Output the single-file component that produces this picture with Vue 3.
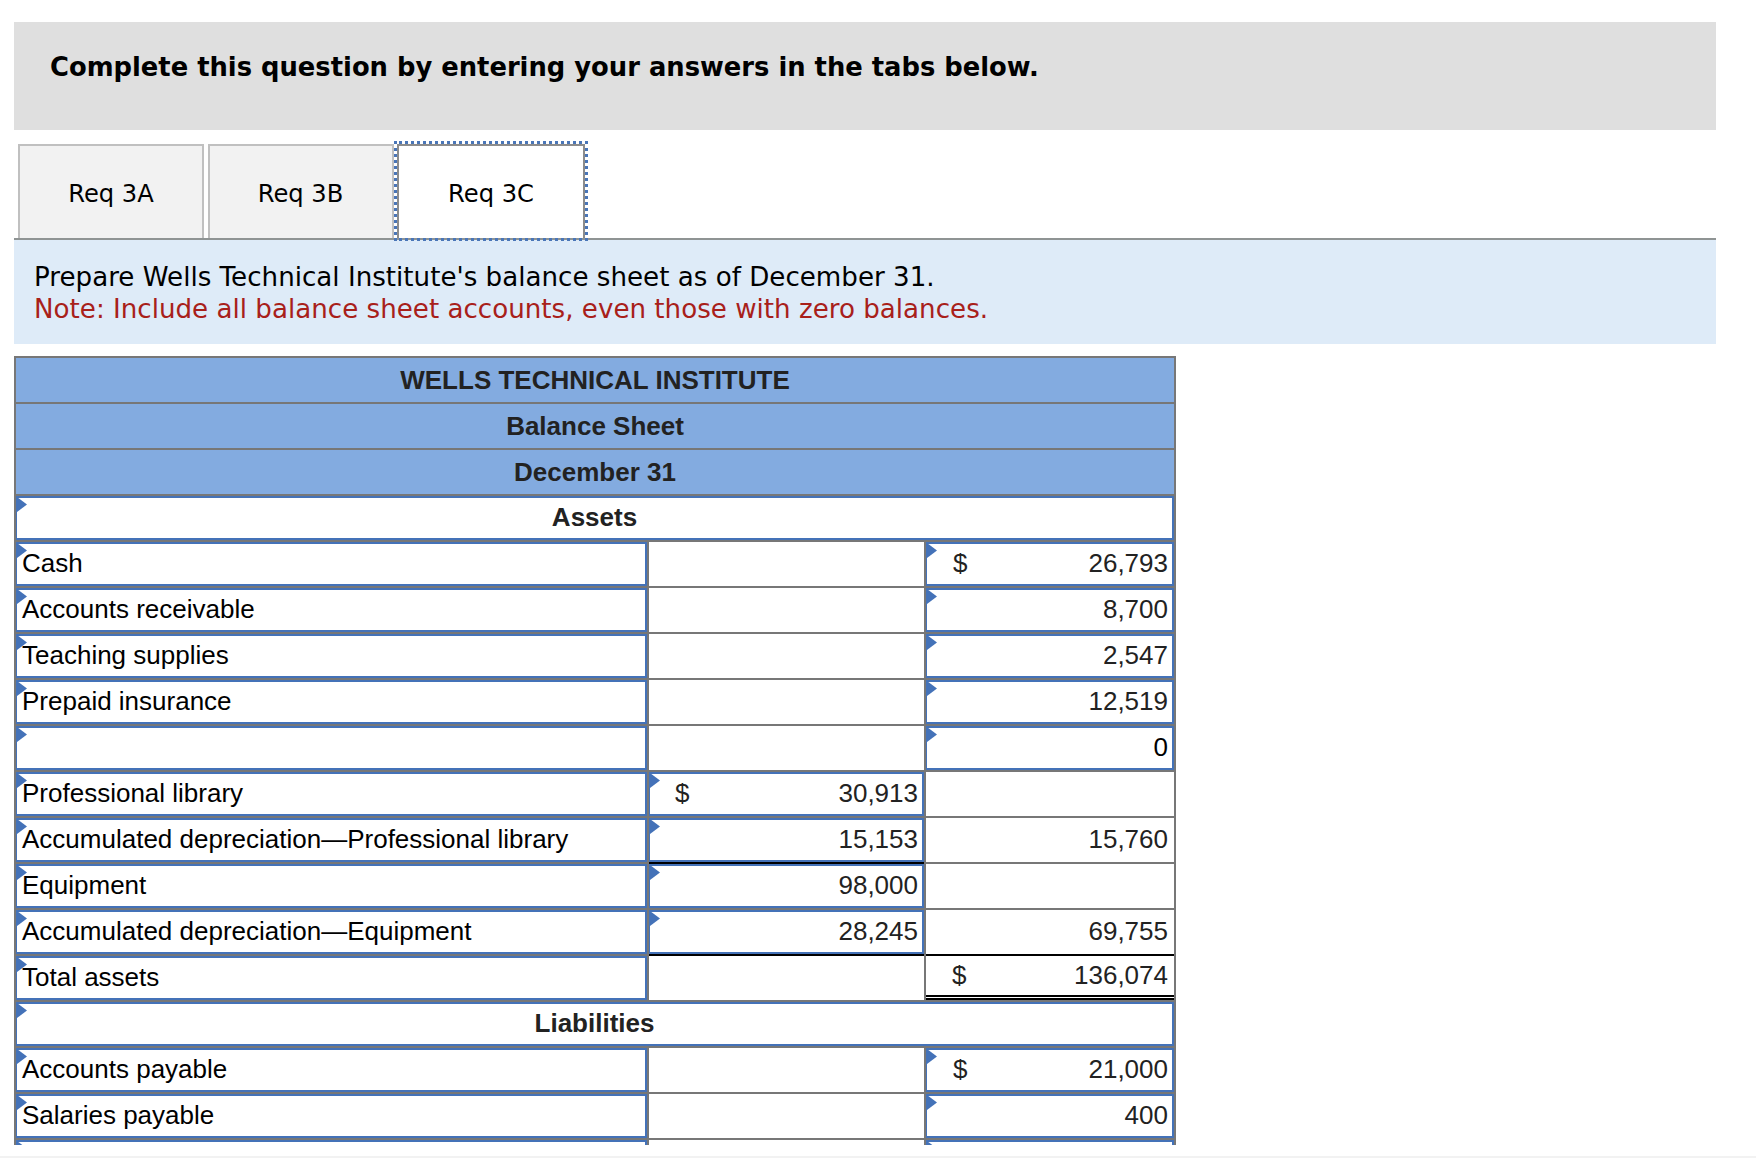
<script setup>
import { ref } from 'vue';

const tabs = ['Req 3A', 'Req 3B', 'Req 3C'];
const activeTab = ref('Req 3C');

const field = (val, sign = false, rule = '') => ({ val, sign, input: true, rule });
const plain = (val, sign = false, rule = '') => ({ val, sign, input: false, rule });
const empty = (rule = '') => ({ val: '', sign: false, input: false, rule });

const titles = ['WELLS TECHNICAL INSTITUTE', 'Balance Sheet', 'December 31'];

// section: a full width heading row, otherwise label plus two amount columns
const rows = [
    { section: 'Assets' },
    { label: 'Cash', cells: [empty(), field('26,793', true)] },
    { label: 'Accounts receivable', cells: [empty(), field('8,700')] },
    { label: 'Teaching supplies', cells: [empty(), field('2,547')] },
    { label: 'Prepaid insurance', cells: [empty(), field('12,519')] },
    { label: '', cells: [empty(), field('0', false, 'zero')] },
    { label: 'Professional library', cells: [field('30,913', true), empty()] },
    { label: 'Accumulated depreciation—Professional library', cells: [field('15,153', false, 'single'), plain('15,760')] },
    { label: 'Equipment', cells: [field('98,000'), empty()] },
    { label: 'Accumulated depreciation—Equipment', cells: [field('28,245', false, 'single'), plain('69,755', false, 'single')] },
    { label: 'Total assets', cells: [empty(), plain('136,074', true, 'double')] },
    { section: 'Liabilities' },
    { label: 'Accounts payable', cells: [empty(), field('21,000', true)] },
    { label: 'Salaries payable', cells: [empty(), field('400')] },
    { label: '', cells: [empty(), field('')] },
];
</script>

<template>
    <div class="page">
        <div class="banner">Complete this question by entering your answers in the tabs below.</div>

        <div class="tabs">
            <div
                v-for="tab in tabs"
                :key="tab"
                class="tab"
                :class="{ active: tab === activeTab }"
            >{{ tab }}</div>
        </div>

        <div class="prompt">
            <div>Prepare Wells Technical Institute's balance sheet as of December 31.</div>
            <div class="note">Note: Include all balance sheet accounts, even those with zero balances.</div>
        </div>

        <div class="sheet">
            <table>
                <colgroup>
                    <col class="col-label" />
                    <col class="col-mid" />
                    <col class="col-right" />
                </colgroup>
                <tbody>
                    <tr v-for="title in titles" :key="title">
                        <th colspan="3">{{ title }}</th>
                    </tr>
                    <tr v-for="(row, i) in rows" :key="i">
                        <td v-if="row.section" colspan="3">
                            <div class="field section">{{ row.section }}</div>
                        </td>
                        <template v-else>
                            <td>
                                <div class="field text">{{ row.label }}</div>
                            </td>
                            <td
                                v-for="(cell, j) in row.cells"
                                :key="j"
                                :class="cell.rule"
                            >
                                <div class="amount" :class="{ field: cell.input }">
                                    <span>{{ cell.sign ? '$' : '' }}</span>
                                    <span>{{ cell.val }}</span>
                                </div>
                            </td>
                        </template>
                    </tr>
                </tbody>
            </table>
        </div>

        <div class="footer"></div>
    </div>
</template>

<style>
html,
body {
    margin: 0;
    background: #fff;
    overflow: hidden;
}
</style>

<style scoped>
.page {
    height: 1164px;
    padding-top: 22px;
    box-sizing: border-box;
    overflow: hidden;
    font-family: "DejaVu Sans", sans-serif;
    color: #000;
}

.banner {
    width: 1702px;
    height: 108px;
    margin-left: 14px;
    padding: 29px 0 0 36px;
    box-sizing: border-box;
    background: #dfdfdf;
    font-size: 25.8px;
    font-weight: bold;
    line-height: 32px;
}

.tabs {
    display: flex;
    gap: 3.5px;
    margin: 14px 0 0 18px;
}

.tab {
    width: 186px;
    height: 94px;
    padding-top: 3px;
    box-sizing: border-box;
    display: flex;
    align-items: center;
    justify-content: center;
    background: #f2f2f2;
    border: 2px solid #c0c0c0;
    border-bottom: none;
    font-size: 24.2px;
}

.tab.active {
    position: relative;
    width: 188px;
    background: #fff;
    border-color: #8c8c8c;
    outline: 3px dotted #4a76b8;
    outline-offset: 0;
}

.prompt {
    width: 1702px;
    height: 106px;
    margin-left: 14px;
    padding: 21px 0 0 20px;
    box-sizing: border-box;
    border-top: 2px solid #8f9494;
    background: #deebf8;
    font-size: 26.15px;
    line-height: 32px;
}

.note {
    color: #a8201a;
}

.sheet {
    width: 1162px;
    height: 789px;
    margin: 12px 0 0 14px;
    overflow: hidden;
}

table {
    width: 1162px;
    table-layout: fixed;
    border-collapse: collapse;
    font-family: "Liberation Sans", Arial, sans-serif;
    font-size: 26px;
    color: #222;
}

.col-label {
    width: 633px;
}

.col-mid {
    width: 277px;
}

th,
td {
    position: relative;
    height: 44px;
    padding: 0;
    border: 2px solid #777;
}

th {
    background: #83abe0;
    font-weight: bold;
    text-align: center;
    line-height: 42px;
}

.field {
    position: relative;
    height: 44px;
    box-sizing: border-box;
    border: 2px solid #4472b8;
    border-left-width: 1px;
    background: #fff;
}

/* small marker in the corner of every input */
.field::before {
    content: "";
    position: absolute;
    top: -1px;
    left: 0;
    width: 10px;
    height: 15px;
    background: #4472b8;
    clip-path: polygon(0 0, 100% 50%, 0 100%);
}

.section {
    text-align: center;
    font-weight: bold;
    line-height: 38px;
}

.text {
    padding-left: 5px;
    color: #000;
    line-height: 38px;
}

.amount {
    display: flex;
    justify-content: space-between;
    height: 44px;
    box-sizing: border-box;
    padding: 0 6px 0 26px;
    line-height: 42px;
}

.amount.field {
    padding: 0 4px 0 25px;
    line-height: 38px;
}

td:last-child .amount.field {
    padding: 0 4px 0 26px;
}

.zero .amount {
    color: #000;
}

.single::after,
.double::after {
    content: "";
    position: absolute;
    left: 0;
    right: 0;
}

.single::after {
    bottom: -2px;
    height: 2px;
    background: #000;
}

.double .amount {
    line-height: 38px;
}

.double::after {
    bottom: 0;
    height: 1px;
    border-top: 2px solid #000;
    border-bottom: 2px solid #000;
}

.footer {
    height: 0;
    margin-top: 11px;
    border-top: 2px solid #f2f2f2;
}
</style>
